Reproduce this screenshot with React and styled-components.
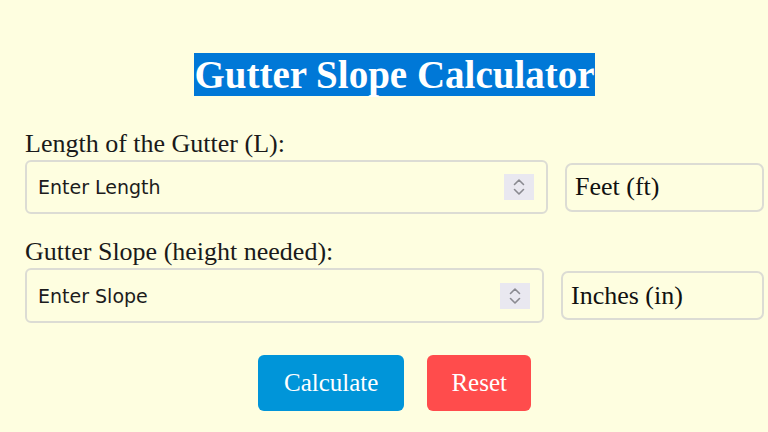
import React from "react";
import styled, { createGlobalStyle } from "styled-components";

const Global = createGlobalStyle`
  html, body { margin: 0; padding: 0; background: #fefee0; }
  body { font-family: "Liberation Serif", "Times New Roman", serif; color: #111; }
  * { box-sizing: border-box; }
`;

const Page = styled.div`
  width: 768px;
  height: 432px;
  overflow: hidden;
  background: #fefee0;
  padding: 54px 4px 0 25px;
`;

const Title = styled.h1`
  margin: 0 0 34px;
  text-align: center;
  font-family: "Liberation Serif", serif;
  font-weight: bold;
  font-size: 39px;
  line-height: 42px;
  color: #fff;
  & span { background: #0078d7; }
`;

const Field = styled.div`
  margin-bottom: ${(p) => p.$mb}px;
`;

const Label = styled.label`
  display: block;
  font-size: 26px;
  line-height: 28px;
  margin-bottom: 2px;
  color: #1a1a1a;
`;

const Row = styled.div`
  display: flex;
  align-items: center;
  gap: ${(p) => p.$gap}px;
`;

const InputWrap = styled.div`
  position: relative;
  width: ${(p) => p.$w}px;
`;

const Input = styled.input`
  width: 100%;
  height: ${(p) => p.$h}px;
  border: 2px solid #dcdcd4;
  border-radius: 6px;
  background: #fefee0;
  padding: 0 50px 0 11px;
  font-family: "DejaVu Sans", Verdana, sans-serif;
  font-size: 19px;
  outline: none;
  &::placeholder { color: #1c1c1c; opacity: 1; }
`;

const Spinner = styled.div`
  position: absolute;
  right: 14px;
  top: 50%;
  transform: translateY(-50%);
  width: 30px;
  height: 26px;
  background: #e9e8f0;
  display: flex;
  align-items: center;
  justify-content: center;
`;

const Unit = styled.div`
  width: ${(p) => p.$w}px;
  height: 49px;
  border: 2px solid #dcdcd4;
  border-radius: 7px;
  padding: 0 0 0 8px;
  display: flex;
  align-items: center;
  font-size: 26px;
  color: #111;
`;

const Buttons = styled.div`
  display: flex;
  justify-content: center;
  gap: 23px;
  margin-top: 32px;
`;

const Button = styled.button`
  height: 56px;
  padding: 0 ${(p) => p.$px}px;
  border: none;
  border-radius: 6px;
  background: ${(p) => p.$bg};
  color: #fff;
  font-family: "Liberation Serif", serif;
  font-size: 25px;
  cursor: pointer;
`;

const Chevrons = () => (
  <svg width="14" height="22" viewBox="0 0 14 22" fill="none" stroke="#8a8a90" strokeWidth="1.6" strokeLinecap="round" strokeLinejoin="round">
    <path d="M2.5 8.5 L7 4 L11.5 8.5" />
    <path d="M2.5 13.5 L7 18 L11.5 13.5" />
  </svg>
);

export default function App() {
  return (
    <>
      <Global />
      <Page>
        <Title><span>Gutter Slope Calculator</span></Title>
        <Field $mb={24}>
          <Label>Length of the Gutter (L):</Label>
          <Row $gap={17}>
            <InputWrap $w={523}>
              <Input $h={54} placeholder="Enter Length" />
              <Spinner><Chevrons /></Spinner>
            </InputWrap>
            <Unit $w={199}>Feet (ft)</Unit>
          </Row>
        </Field>
        <Field $mb={0}>
          <Label>Gutter Slope (height needed):</Label>
          <Row $gap={17}>
            <InputWrap $w={519}>
              <Input $h={55} placeholder="Enter Slope" />
              <Spinner><Chevrons /></Spinner>
            </InputWrap>
            <Unit $w={203}>Inches (in)</Unit>
          </Row>
        </Field>
        <Buttons>
          <Button $bg="#0095d9" $px={26}>Calculate</Button>
          <Button $bg="#ff4c4c" $px={24}>Reset</Button>
        </Buttons>
      </Page>
    </>
  );
}
